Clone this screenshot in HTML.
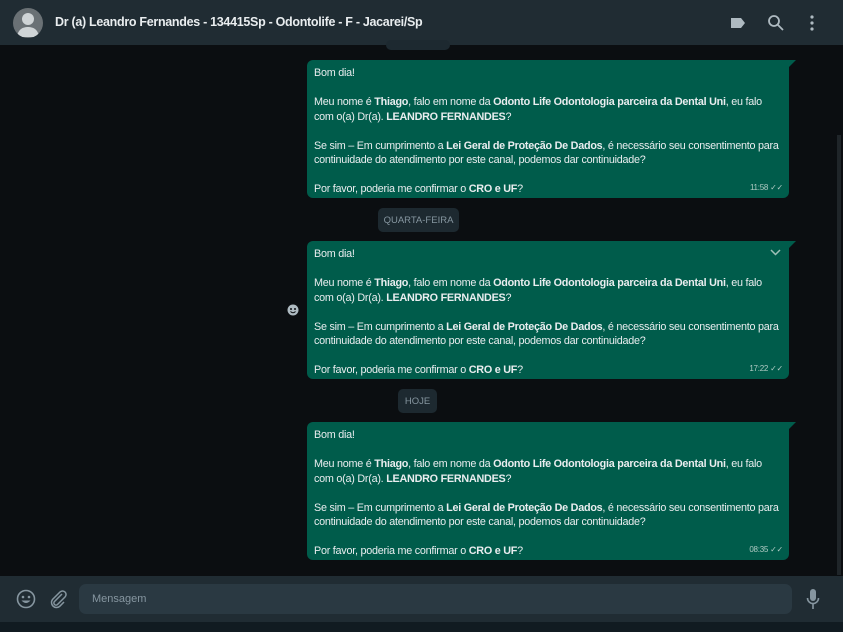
<!DOCTYPE html>
<html><head><meta charset="utf-8"><style>
*{margin:0;padding:0;box-sizing:border-box}
body{width:843px;height:632px;background:#0b0e11;font-family:"Liberation Sans",sans-serif;position:relative;overflow:hidden;color:#e9edef}
.hdr{position:absolute;left:0;top:0;width:843px;height:45px;background:#202c33}
.av{position:absolute;left:13px;top:8px;width:30px;height:30px;border-radius:50%;background:#6a7175;overflow:hidden}
.title{position:absolute;left:55px;top:15px;font-size:12.5px;font-weight:bold;color:#e9edef;letter-spacing:-0.3px}
.chat{position:absolute;left:0;top:45px;width:836px;height:531px;background:#0b0e11}
.sb{position:absolute;left:836px;top:45px;width:7px;height:531px;background:#0b0e11}
.sb i{position:absolute;left:1px;top:90px;width:4px;height:440px;background:#1f2529}
.b{position:absolute;left:307px;width:482px;height:138px;background:#005c4b;border-radius:6px;border-top-right-radius:0;padding:6px 7px;font-size:10.8px;line-height:14.5px;letter-spacing:-0.25px;color:#e9edef}
.b:after{content:"";position:absolute;right:-7px;top:0;border-top:7px solid #005c4b;border-right:7px solid transparent}
.b p{margin-bottom:14.5px}
.t{position:absolute;right:6px;bottom:3px;font-size:8px;color:#b0cbc4}
.chip{position:absolute;height:24px;background:#1d2930;border-radius:5px;color:#8696a0;font-size:9.5px;line-height:25px;text-align:center}
.ftr{position:absolute;left:0;top:576px;width:843px;height:46px;background:#202c33}
.bot{position:absolute;left:0;top:622px;width:843px;height:10px;background:#111b21}
.inp{position:absolute;left:79px;top:8px;width:713px;height:30px;background:#2a3942;border-radius:7px;color:#8696a0;font-size:11px;line-height:30px;padding-left:13px}
</style></head><body>
<div class="hdr">
<div class="av"><svg width="30" height="30"><circle cx="15" cy="11" r="6" fill="#cfd4d6"/><path d="M4 29c1-8 6-10 11-10s10 2 11 10z" fill="#cfd4d6"/></svg></div>
<div class="title">Dr (a) Leandro Fernandes - 134415Sp - Odontolife - F - Jacarei/Sp</div>
<svg style="position:absolute;left:730px;top:16px" width="16" height="14"><path d="M1 2h10l4 5-4 5H1z" fill="#aebac1"/></svg>
<svg style="position:absolute;left:767px;top:14px" width="17" height="17"><circle cx="7" cy="7" r="5" stroke="#aebac1" stroke-width="1.8" fill="none"/><path d="M11 11l5 5" stroke="#aebac1" stroke-width="1.8"/></svg>
<svg style="position:absolute;left:809px;top:14px" width="6" height="18"><circle cx="3" cy="3" r="1.6" fill="#aebac1"/><circle cx="3" cy="9" r="1.6" fill="#aebac1"/><circle cx="3" cy="15" r="1.6" fill="#aebac1"/></svg>
</div>
<div class="chat"></div>
<div class="sb"><i></i></div>
<div class="chip" style="left:386px;top:40px;width:64px;height:10px"></div>
<div class="b" style="top:60px"><p>Bom dia!</p><p>Meu nome é <b>Thiago</b>, falo em nome da <b>Odonto Life Odontologia parceira da Dental Uni</b>, eu falo com o(a) Dr(a). <b>LEANDRO FERNANDES</b>?</p><p>Se sim – Em cumprimento a <b>Lei Geral de Proteção De Dados</b>, é necessário seu consentimento para continuidade do atendimento por este canal, podemos dar continuidade?</p><p>Por favor, poderia me confirmar o <b>CRO e UF</b>?</p><span class="t">11:58 ✓✓</span></div>
<div class="chip" style="left:378px;top:208px;width:81px">QUARTA-FEIRA</div>
<div class="b" style="top:241px"><p>Bom dia!</p><p>Meu nome é <b>Thiago</b>, falo em nome da <b>Odonto Life Odontologia parceira da Dental Uni</b>, eu falo com o(a) Dr(a). <b>LEANDRO FERNANDES</b>?</p><p>Se sim – Em cumprimento a <b>Lei Geral de Proteção De Dados</b>, é necessário seu consentimento para continuidade do atendimento por este canal, podemos dar continuidade?</p><p>Por favor, poderia me confirmar o <b>CRO e UF</b>?</p><span class="t">17:22 ✓✓</span>
<svg style="position:absolute;right:8px;top:8px" width="11" height="7"><path d="M1 1l4.5 4.5L10 1" stroke="#9fc0b8" stroke-width="1.5" fill="none"/></svg></div>
<svg style="position:absolute;left:287px;top:304px" width="12" height="12"><circle cx="6" cy="6" r="5.5" fill="#aebac1"/><circle cx="4" cy="5" r="1" fill="#0b0e11"/><circle cx="8" cy="5" r="1" fill="#0b0e11"/><path d="M3.5 7.5q2.5 2.5 5 0" stroke="#0b0e11" fill="none"/></svg>
<div class="chip" style="left:398px;top:389px;width:39px">HOJE</div>
<div class="b" style="top:422px"><p>Bom dia!</p><p>Meu nome é <b>Thiago</b>, falo em nome da <b>Odonto Life Odontologia parceira da Dental Uni</b>, eu falo com o(a) Dr(a). <b>LEANDRO FERNANDES</b>?</p><p>Se sim – Em cumprimento a <b>Lei Geral de Proteção De Dados</b>, é necessário seu consentimento para continuidade do atendimento por este canal, podemos dar continuidade?</p><p>Por favor, poderia me confirmar o <b>CRO e UF</b>?</p><span class="t">08:35 ✓✓</span></div>
<div class="ftr">
<svg style="position:absolute;left:16px;top:13px" width="20" height="20"><circle cx="10" cy="10" r="8.5" stroke="#8696a0" stroke-width="1.6" fill="none"/><circle cx="7" cy="8" r="1.3" fill="#8696a0"/><circle cx="13" cy="8" r="1.3" fill="#8696a0"/><path d="M5.5 11.5q4.5 5 9 0z" fill="#8696a0"/></svg>
<svg style="position:absolute;left:48px;top:13px" width="20" height="20"><path d="M14 5l-7.5 7.5a2 2 0 0 0 3 3L17 8a3.5 3.5 0 0 0-5-5L4.5 10.5a5 5 0 0 0 7 7L16 13" stroke="#8696a0" stroke-width="1.5" fill="none"/></svg>
<div class="inp">Mensagem</div>
<svg style="position:absolute;left:806px;top:12px" width="14" height="22"><rect x="4" y="1" width="6" height="12" rx="3" fill="#8696a0"/><path d="M1.5 10a5.5 5.5 0 0 0 11 0M7 16v5" stroke="#8696a0" stroke-width="1.6" fill="none"/></svg>
</div>
<div class="bot"></div>
</body></html>
